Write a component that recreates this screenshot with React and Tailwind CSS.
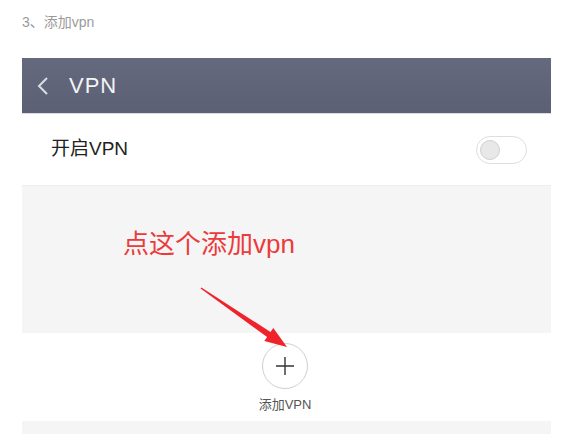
export default function App() {
  return (
    <div className="relative h-[434px] w-[574px] overflow-hidden bg-white font-['Liberation_Sans','Noto_Sans_CJK_SC',sans-serif]">
      <div className="pl-[22px] pt-[12px] text-[14px] leading-[20px] text-[#9a9a9a]">3、添加vpn</div>

      <div className="ml-[22px] mt-[26px] w-[529px]">
        <header className="flex h-[56px] items-center border-b border-[#d9dbe2] bg-[linear-gradient(180deg,#65697d_0%,#5c6074_100%)]">
          <svg className="ml-[14px]" width="14" height="20" viewBox="0 0 14 20">
            <polyline points="11,2 3,10 11,18" fill="none" stroke="#dcdde3" strokeWidth="2" />
          </svg>
          <span className="ml-[19px] text-[22px] tracking-[1px] text-[#f4f4f6]">VPN</span>
        </header>

        <div className="flex h-[71px] items-center justify-between pl-[29px] pr-[24px]">
          <span className="text-[19px] text-[#222]">开启VPN</span>
          <div className="flex h-[28px] w-[51px] items-center rounded-full border border-[#dedede] bg-white pl-[3px]">
            <div className="h-[20px] w-[20px] rounded-full border border-[#d0d0d0] bg-[#e8e8e8]" />
          </div>
        </div>

        <div className="h-[148px] border-t border-[#eeeeee] bg-[#f5f5f5] pl-[101px] pt-[42px]">
          <span className="text-[26px] leading-[32px] text-[#ec3b3b]">点这个添加vpn</span>
        </div>

        <div className="flex h-[88px] flex-col items-center pr-[3px] pt-[10px]">
          <div className="flex h-[46px] w-[46px] items-center justify-center rounded-full border border-[#cfcfcf] bg-white">
            <svg width="20" height="20" viewBox="0 0 20 20">
              <path d="M10 1v18M1 10h18" stroke="#333" strokeWidth="1.4" />
            </svg>
          </div>
          <span className="mt-[7px] text-[13px] leading-[18px] text-[#555]">添加VPN</span>
        </div>

        <div className="h-[13px] bg-[#f5f5f5]" />
      </div>

      <svg className="pointer-events-none absolute left-0 top-0" width="574" height="434" viewBox="0 0 574 434">
        <polygon
          points="201.4,287.4 270.5,332 273.3,327.9 287,347 264.3,341.1 267.1,337 200.6,288.6"
          fill="#f0232a"
        />
      </svg>
    </div>
  )
}
